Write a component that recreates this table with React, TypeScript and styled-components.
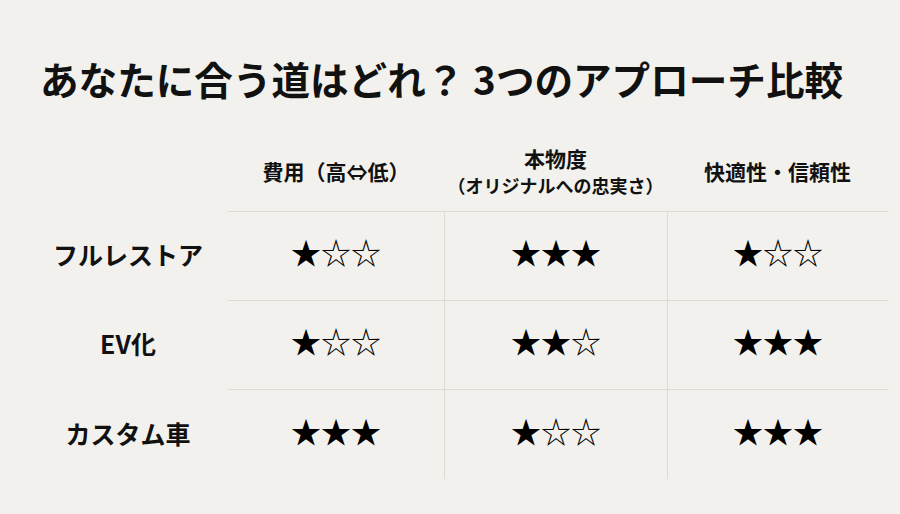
import React from "react";
import styled, { createGlobalStyle } from "styled-components";

const Global = createGlobalStyle`
  html, body {
    margin: 0;
    padding: 0;
    background: #f2f1ed;
  }
  body {
    font-family: "Noto Sans CJK JP", "Noto Sans", sans-serif;
    color: #111111;
  }
`;

const Page = styled.div`
  width: 900px;
  height: 514px;
  box-sizing: border-box;
  padding: 55px 12px 0 28px;
  background: #f2f1ed;
  overflow: hidden;
`;

const Title = styled.h1`
  margin: 0 0 34px 12px;
  font-size: 38.6px;
  line-height: 46px;
  font-weight: 700;
  letter-spacing: 0;
  color: #111111;
`;

const Table = styled.div`
  display: grid;
  grid-template-columns: 200px 216px 223px 221px;
  grid-template-rows: 76px 89px 89px 90px;
`;

const Corner = styled.div``;

const HeadCell = styled.div`
  display: flex;
  flex-direction: column;
  align-items: center;
  justify-content: center;
  padding-bottom: 4px;
  font-weight: 700;
  font-size: 21px;
  line-height: 28px;
  color: #111111;
`;

const HeadSub = styled.span`
  font-size: 18px;
  line-height: 26px;
`;

const RowLabel = styled.div`
  display: flex;
  align-items: center;
  justify-content: center;
  font-weight: 700;
  font-size: 25px;
  color: #111111;
  padding-bottom: 3px;
`;

const Cell = styled.div<{ $first?: boolean }>`
  display: flex;
  align-items: center;
  justify-content: center;
  border-top: 1px solid #dcdbd6;
  border-left: ${(p) => (p.$first ? "none" : "1px solid #dcdbd6")};
`;

const StarText = styled.span`
  font-family: "Noto Sans CJK JP", "DejaVu Sans", sans-serif;
  font-size: 30px;
  line-height: 1;
  padding-bottom: 10px;
  color: #000000;
  letter-spacing: 0;
`;

const Stars = ({ n }: { n: number }) => (
  <StarText>{"★".repeat(n) + "☆".repeat(3 - n)}</StarText>
);

const rows: { label: string; values: number[] }[] = [
  { label: "フルレストア", values: [1, 3, 1] },
  { label: "EV化", values: [1, 2, 3] },
  { label: "カスタム車", values: [3, 1, 3] },
];

export default function App() {
  return (
    <Page>
      <Global />
      <Title>あなたに合う道はどれ？ 3つのアプローチ比較</Title>
      <Table>
        <Corner />
        <HeadCell>費用（高⇔低）</HeadCell>
        <HeadCell>
          本物度
          <HeadSub>（オリジナルへの忠実さ）</HeadSub>
        </HeadCell>
        <HeadCell>快適性・信頼性</HeadCell>
        {rows.map((r) => (
          <React.Fragment key={r.label}>
            <RowLabel>{r.label}</RowLabel>
            {r.values.map((v, i) => (
              <Cell key={i} $first={i === 0}>
                <Stars n={v} />
              </Cell>
            ))}
          </React.Fragment>
        ))}
      </Table>
    </Page>
  );
}
